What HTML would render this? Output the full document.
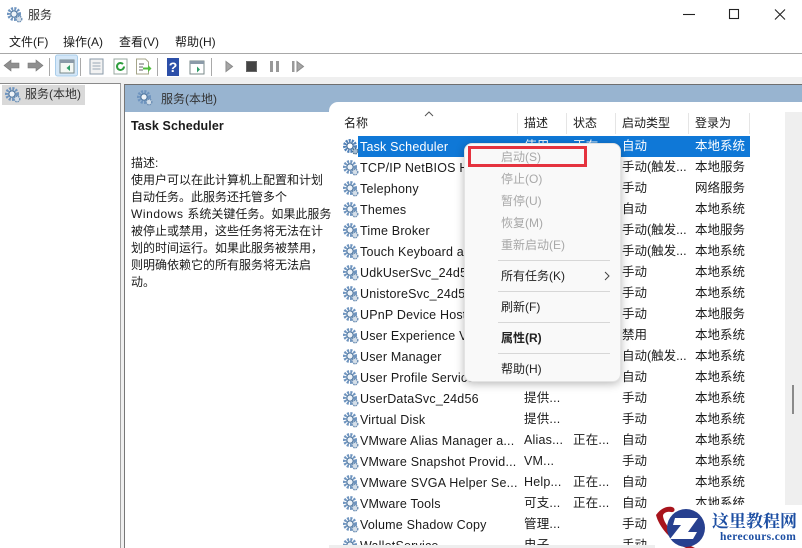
<!DOCTYPE html>
<html lang="zh"><head><meta charset="utf-8"><style>
html,body{margin:0;padding:0;width:802px;height:548px;overflow:hidden;background:#fff}
body{position:relative;font:12.5px "Liberation Sans","Noto Sans CJK SC",sans-serif;color:#1a1a1a}
.a,.r span,.m div{position:absolute;white-space:nowrap}
.a{line-height:18px}
.r{position:absolute;left:329px;width:456px;height:21px;line-height:21px;letter-spacing:.2px}
.r svg{position:absolute;left:13px;top:2px}
.r span{top:0}
.r .n{left:31px;top:1px}.d{left:195px}.s{left:244px}.t{left:293px;letter-spacing:0}.l{left:366px;letter-spacing:0}
.m{position:absolute;left:464px;top:143px;width:157px;height:239px;background:#f9f9f9;border-radius:8px;box-shadow:0 2px 9px rgba(0,0,0,.28);border:1px solid #e3e3e3;box-sizing:border-box;font-size:12px;color:#222}
.m div{left:36px;line-height:18px}.m .g{color:#a8a8a8}
.m hr{position:absolute;left:33px;width:112px;margin:0;border:0;border-top:1px solid #d7d7d7}
.h{position:absolute;top:113px;width:1px;height:21px;background:#e5e5e5}
.hd{position:absolute;top:114px;line-height:18px;font-size:12px}
.sep{position:absolute;top:58px;width:1px;height:18px;background:#a9a9a9}
</style></head><body>
<svg width="0" height="0" style="position:absolute"><defs>
<symbol id="g" viewBox="0 0 18 18">
<circle cx="8" cy="8" r="5.4" fill="none" stroke="#6e94bf" stroke-width="3.200" stroke-dasharray="2 1.200"/>
<circle cx="8" cy="8" r="3.200" fill="#eef3f8" stroke="#50779f" stroke-width="1.200"/>
<circle cx="13" cy="13" r="2.800" fill="#d5dfe9" stroke="#6c8fb4" stroke-width="1.400" stroke-dasharray="1.500 .8"/>
</symbol>
<symbol id="gs" viewBox="0 0 18 18">
<circle cx="8" cy="8" r="5.400" fill="none" stroke="#4f80b8" stroke-width="3.200" stroke-dasharray="2 1"/>
<circle cx="8" cy="8" r="3.200" fill="#fff" stroke="#3f6a99" stroke-width="1.200"/>
<circle cx="13.200" cy="13.200" r="2.600" fill="#a9bed4" stroke="#47708f" stroke-width="1.400" stroke-dasharray="1.500 .8"/>
</symbol>
</defs></svg>

<!-- title bar -->
<svg class="a" style="left:6px;top:6px" width="18" height="18"><use href="#g"/></svg>
<div class="a" style="left:28px;top:6px;font-size:12px;color:#333">服务</div>
<svg class="a" style="left:683px;top:8px" width="110" height="14" fill="none" stroke="#222" stroke-width="1.100">
<path d="M0 6.500H12"/><rect x="46.500" y="1.500" width="9" height="9"/><path d="M92 1.500L102 11.500M102 1.500L92 11.500"/></svg>

<!-- menu bar -->
<div class="a" style="left:9px;top:33px;font-size:12px">文件(F)</div>
<div class="a" style="left:63px;top:33px;font-size:12px">操作(A)</div>
<div class="a" style="left:119px;top:33px;font-size:12px">查看(V)</div>
<div class="a" style="left:175px;top:33px;font-size:12px">帮助(H)</div>
<div class="a" style="left:0;top:53px;width:802px;height:1px;background:#a8a8a8"></div>

<!-- toolbar -->
<svg class="a" style="left:0;top:54px;z-index:2" width="320" height="24">
<path d="M4 11.500L11 6V9H19V14H11V17Z" fill="#8f8f8f" stroke="#777" stroke-width=".6"/>
<path d="M43 11.500L36 6V9H28V14H36V17Z" fill="#8f8f8f" stroke="#777" stroke-width=".6"/>
<rect x="55.500" y="1" width="22" height="21" rx="2" fill="#d4e7f8" stroke="#a9cdea"/>
<rect x="60" y="6" width="14" height="13" fill="#f4f8f4" stroke="#7a8a8a"/><rect x="60" y="6" width="14" height="3" fill="#8b9aa8"/>
<path d="M70 11L66.500 14L70 17Z" fill="#2e9c66"/>
<rect x="90" y="5" width="13" height="15" fill="#f2f2f2" stroke="#8a9aa8"/><path d="M92.500 9H100.500M92.500 12H100.500M92.500 15H100.500" stroke="#9aa8b5"/>
<rect x="114" y="5" width="13" height="15" fill="#fff" stroke="#9aa8a0"/><path d="M124 12.500a3.500 3.500 0 1 1-1-2.500" fill="none" stroke="#2e9e3e" stroke-width="2"/>
<path d="M136.500 5h9l3 3v12h-12z" fill="#fff" stroke="#a5a58a"/><path d="M139 10h5M139 13h4M139 16h4" stroke="#666"/>
<path d="M143 13.500h5V11l3.500 3.500-3.500 3.500v-2.500h-5z" fill="#52bd3e"/>
<rect x="167" y="4" width="12" height="18" fill="#2c4fa8"/>
<text x="173" y="18" font-size="14" font-weight="700" fill="#fff" text-anchor="middle" font-family="Liberation Sans">?</text>
<rect x="190" y="7" width="14" height="13" fill="#fff" stroke="#7a8a8a"/><rect x="190" y="7" width="14" height="3" fill="#8b9aa8"/><path d="M197 12.500l3 3-3 3z" fill="#2e9c66"/>
<path d="M226 7.500L232.500 12.500L226 17.500Z" fill="#a5a5a5" stroke="#8a8a8a"/>
<rect x="246.500" y="7.500" width="10" height="10" fill="#444" stroke="#666"/>
<rect x="270" y="7" width="3" height="11" fill="#999"/><rect x="276" y="7" width="3" height="11" fill="#999"/>
<rect x="292" y="7" width="2.500" height="11" fill="#999"/><path d="M297 7.500L303.500 12.500L297 17.500Z" fill="#a5a5a5" stroke="#8a8a8a"/>
</svg>
<div class="sep" style="left:49px"></div><div class="sep" style="left:80px"></div><div class="sep" style="left:157px"></div><div class="sep" style="left:211px"></div>

<!-- frame -->
<div class="a" style="left:0;top:77px;width:802px;height:471px;background:#efefef"></div>
<div class="a" style="left:0;top:83px;width:120px;height:465px;background:#fff;border-top:1px solid #8a8a8a;border-right:1px solid #a0a0a0"></div>
<div class="a" style="left:2px;top:85px;width:83px;height:20px;background:#d9d9d9"></div>
<svg class="a" style="left:4px;top:86px" width="18" height="18"><use href="#g"/></svg>
<div class="a" style="left:25px;top:85px;font-size:12px;color:#333">服务(本地)</div>

<!-- right pane -->
<div class="a" style="left:124px;top:84px;width:678px;height:464px;background:#fff;border-top:1px solid #6f6f6f;border-left:1px solid #777;box-sizing:border-box"></div>
<div class="a" style="left:125px;top:85px;width:677px;height:17px;background:#98b4d0"></div>
<div class="a" style="left:125px;top:102px;width:204px;height:10px;background:#98b4d0"></div>
<div class="a" style="left:329px;top:102px;width:12px;height:12px;background:#98b4d0"></div>
<div class="a" style="left:329px;top:102px;width:30px;height:30px;background:#fff;border-radius:9px 0 0 0"></div>
<svg class="a" style="left:136px;top:89px" width="18" height="18"><use href="#g"/></svg>
<div class="a" style="left:161px;top:90px;font-size:12px;color:#333">服务(本地)</div>

<!-- description -->
<div class="a" style="left:131px;top:117px;font-weight:700;font-size:12.500px;letter-spacing:.1px">Task Scheduler</div>
<div class="a" style="left:131px;top:155px;font-size:12px;line-height:17px;white-space:pre">描述:
使用户可以在此计算机上配置和计划
自动任务。此服务还托管多个
<span style="letter-spacing:.55px">Windows </span>系统关键任务。如果此服务
被停止或禁用，这些任务将无法在计
划的时间运行。如果此服务被禁用，
则明确依赖它的所有服务将无法启
动。</div>

<!-- list header -->
<div class="hd" style="left:344px">名称</div><div class="hd" style="left:524px">描述</div><div class="hd" style="left:573px">状态</div><div class="hd" style="left:622px">启动类型</div><div class="hd" style="left:695px">登录为</div>
<div class="h" style="left:517px"></div><div class="h" style="left:566px"></div><div class="h" style="left:615px"></div><div class="h" style="left:688px"></div><div class="h" style="left:749px"></div>
<svg class="a" style="left:424px;top:111px" width="10" height="6" fill="none" stroke="#555"><path d="M1 5L5 1L9 5"/></svg>

<!-- rows -->
<div class="a" style="left:358px;top:136px;width:392px;height:21px;background:#0f78d7"></div>
<div class="r" style="top:136px"><svg width="18" height="18"><use href="#gs"/></svg><span class="n" style="color:#fff">Task Scheduler</span><span class="d" style="color:#fff">使用...</span><span class="s" style="color:#fff">正在...</span><span class="t" style="color:#fff">自动</span><span class="l" style="color:#fff">本地系统</span></div>
<div class="r" style="top:157px"><svg width="18" height="18"><use href="#g"/></svg><span class="n">TCP/IP NetBIOS Helper</span><span class="t">手动(触发...</span><span class="l">本地服务</span></div>
<div class="r" style="top:178px"><svg width="18" height="18"><use href="#g"/></svg><span class="n">Telephony</span><span class="t">手动</span><span class="l">网络服务</span></div>
<div class="r" style="top:199px"><svg width="18" height="18"><use href="#g"/></svg><span class="n">Themes</span><span class="t">自动</span><span class="l">本地系统</span></div>
<div class="r" style="top:220px"><svg width="18" height="18"><use href="#g"/></svg><span class="n">Time Broker</span><span class="t">手动(触发...</span><span class="l">本地服务</span></div>
<div class="r" style="top:241px"><svg width="18" height="18"><use href="#g"/></svg><span class="n">Touch Keyboard and</span><span class="t">手动(触发...</span><span class="l">本地系统</span></div>
<div class="r" style="top:262px"><svg width="18" height="18"><use href="#g"/></svg><span class="n">UdkUserSvc_24d56</span><span class="t">手动</span><span class="l">本地系统</span></div>
<div class="r" style="top:283px"><svg width="18" height="18"><use href="#g"/></svg><span class="n">UnistoreSvc_24d56</span><span class="t">手动</span><span class="l">本地系统</span></div>
<div class="r" style="top:304px"><svg width="18" height="18"><use href="#g"/></svg><span class="n">UPnP Device Host</span><span class="t">手动</span><span class="l">本地服务</span></div>
<div class="r" style="top:325px"><svg width="18" height="18"><use href="#g"/></svg><span class="n">User Experience Virt</span><span class="t">禁用</span><span class="l">本地系统</span></div>
<div class="r" style="top:346px"><svg width="18" height="18"><use href="#g"/></svg><span class="n">User Manager</span><span class="t">自动(触发...</span><span class="l">本地系统</span></div>
<div class="r" style="top:367px"><svg width="18" height="18"><use href="#g"/></svg><span class="n">User Profile Service</span><span class="t">自动</span><span class="l">本地系统</span></div>
<div class="r" style="top:388px"><svg width="18" height="18"><use href="#g"/></svg><span class="n">UserDataSvc_24d56</span><span class="d">提供...</span><span class="t">手动</span><span class="l">本地系统</span></div>
<div class="r" style="top:409px"><svg width="18" height="18"><use href="#g"/></svg><span class="n">Virtual Disk</span><span class="d">提供...</span><span class="t">手动</span><span class="l">本地系统</span></div>
<div class="r" style="top:430px"><svg width="18" height="18"><use href="#g"/></svg><span class="n">VMware Alias Manager a...</span><span class="d">Alias...</span><span class="s">正在...</span><span class="t">自动</span><span class="l">本地系统</span></div>
<div class="r" style="top:451px"><svg width="18" height="18"><use href="#g"/></svg><span class="n">VMware Snapshot Provid...</span><span class="d">VM...</span><span class="t">手动</span><span class="l">本地系统</span></div>
<div class="r" style="top:472px"><svg width="18" height="18"><use href="#g"/></svg><span class="n">VMware SVGA Helper Se...</span><span class="d">Help...</span><span class="s">正在...</span><span class="t">自动</span><span class="l">本地系统</span></div>
<div class="r" style="top:493px"><svg width="18" height="18"><use href="#g"/></svg><span class="n">VMware Tools</span><span class="d">可支...</span><span class="s">正在...</span><span class="t">自动</span><span class="l">本地系统</span></div>
<div class="r" style="top:514px"><svg width="18" height="18"><use href="#g"/></svg><span class="n">Volume Shadow Copy</span><span class="d">管理...</span><span class="t">手动</span></div>
<div class="r" style="top:535px;height:10px;overflow:hidden"><svg width="18" height="18"><use href="#g"/></svg><span class="n">WalletService</span><span class="d">电子...</span><span class="t">手动</span></div>
<div class="a" style="left:329px;top:545px;width:473px;height:3px;background:#eee"></div>

<!-- scrollbar -->
<div class="a" style="left:785px;top:112px;width:17px;height:436px;background:#efefef"></div>
<div class="a" style="left:792px;top:385px;width:2px;height:29px;background:#8a8a8a"></div>

<!-- context menu -->
<div class="m">
<div class="g" style="top:4px">启动(S)</div>
<div class="g" style="top:26px">停止(O)</div>
<div class="g" style="top:48px">暂停(U)</div>
<div class="g" style="top:70px">恢复(M)</div>
<div class="g" style="top:92px">重新启动(E)</div>
<hr style="top:116px">
<div style="top:123px">所有任务(K)</div>
<svg style="position:absolute;left:139px;top:127px" width="6" height="10" fill="none" stroke="#444"><path d="M1 1L5 5L1 9"/></svg>
<hr style="top:147px">
<div style="top:154px">刷新(F)</div>
<hr style="top:178px">
<div style="top:185px;font-weight:700">属性(R)</div>
<hr style="top:209px">
<div style="top:216px">帮助(H)</div>
</div>
<div class="a" style="left:468px;top:146px;width:119px;height:21px;border:3px solid #e5333f;box-sizing:border-box"></div>

<!-- watermark -->
<div class="a" style="left:655px;top:505px;width:147px;height:43px;background:#fff"></div>
<svg class="a" style="left:655px;top:505px" width="56" height="43">
<path d="M1 10C6 3 12 1 17 2C21 3 20 8 16 7C12 6 8 8 8 11C9 20 22 35 40 43L31 43C16 36 4 22 1 10Z" fill="#a8141c"/>
<circle cx="31" cy="23" r="19" fill="#27408f"/>
<path d="M20 13H43L33 27H42L38 34H15L26 20H18Z" fill="#fff"/>
</svg>
<div class="a" style="left:712px;top:510px;font:700 17px/20px 'Noto Serif CJK SC',serif;color:#1d4fa3">这里教程网</div>
<div class="a" style="left:720px;top:530px;font:700 11.500px/14px 'Liberation Serif',serif;color:#1d4fa3;letter-spacing:.35px">herecours.com</div>
</body></html>
